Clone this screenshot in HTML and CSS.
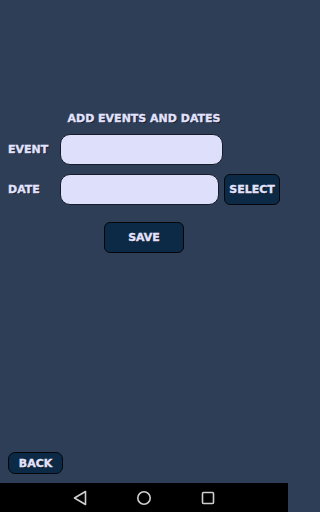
FILE: index.html
```html
<!DOCTYPE html>
<html>
<head>
<meta charset="utf-8">
<link rel="stylesheet" href="styles.css">
</head>
<body>
<div class="screen">
  <div class="title">ADD EVENTS AND DATES</div>
  <div class="row row-event">
    <span class="label">EVENT</span>
    <div class="field field-event"></div>
  </div>
  <div class="row row-date">
    <span class="label">DATE</span>
    <div class="field field-date"></div>
    <button class="btn btn-select">SELECT</button>
  </div>
  <div class="save-wrap">
    <button class="btn btn-save">SAVE</button>
  </div>
  <div class="back-wrap">
    <button class="btn btn-back">BACK</button>
  </div>
  <div class="navbar">
    <svg class="nav-icon" width="14" height="16" viewBox="0 0 14 16"><path d="M12.5 1.5 L1.5 8 L12.5 14.5 Z" fill="none" stroke="#cfcfcf" stroke-width="1.6" stroke-linejoin="round"/></svg>
    <svg class="nav-icon" width="14" height="16" viewBox="0 0 14 16"><circle cx="7" cy="8" r="6.2" fill="none" stroke="#cfcfcf" stroke-width="1.6"/></svg>
    <svg class="nav-icon" width="14" height="16" viewBox="0 0 14 16"><rect x="1.5" y="2.5" width="11" height="11" rx="1" fill="none" stroke="#cfcfcf" stroke-width="1.6"/></svg>
  </div>
</div>
</body>
</html>
```
FILE: styles.css
```css
html, body {
  margin: 0;
  padding: 0;
}
html {
  background: #2f3e57;
}
body {
  width: 288px;
  height: 512px;
  font-family: "DejaVu Sans", sans-serif;
  font-weight: bold;
  color: #e2e3ff;
  overflow: hidden;
}
.screen {
  height: 512px;
  display: flex;
  flex-direction: column;
}
.title {
  margin-top: 112px;
  font-size: 11px;
  line-height: 14px;
  text-align: center;
  -webkit-text-stroke: 0.35px #e2e3ff;
  text-shadow: 1px 1px 0 #10151f;
}
.row {
  display: flex;
  align-items: center;
  padding: 0 8px;
}
.row-event {
  margin-top: 8px;
}
.row-date {
  margin-top: 9px;
}
.label {
  width: 52px;
  font-size: 11px;
  line-height: 14px;
  -webkit-text-stroke: 0.35px #e2e3ff;
  text-shadow: 1px 1px 0 #10151f;
}
.field {
  height: 31px;
  box-sizing: border-box;
  background: #dedffb;
  border: 1px solid #161c2a;
  border-radius: 10px;
}
.field-event {
  width: 163px;
}
.field-date {
  width: 159px;
}
.btn {
  box-sizing: border-box;
  background: #0c2a45;
  border: 1.5px solid #03070c;
  border-radius: 6px;
  color: #e2e3ff;
  font-family: "DejaVu Sans", sans-serif;
  font-weight: bold;
  font-size: 11px;
  padding: 0;
  -webkit-text-stroke: 0.35px #e2e3ff;
  text-shadow: 1px 1px 0 #10151f;
}
.btn-select {
  margin-left: 5px;
  width: 56px;
  height: 31px;
}
.save-wrap {
  margin-top: 17px;
  display: flex;
  justify-content: center;
}
.btn-save {
  width: 80px;
  height: 31px;
}
.back-wrap {
  margin-top: auto;
  margin-bottom: 9px;
  padding: 0 8px;
  display: flex;
}
.btn-back {
  width: 55px;
  height: 22px;
  border-radius: 7px;
}
.navbar {
  height: 29px;
  background: #000;
  display: flex;
  justify-content: center;
  align-items: center;
  gap: 50px;
}
.nav-icon {
  display: block;
}
```
